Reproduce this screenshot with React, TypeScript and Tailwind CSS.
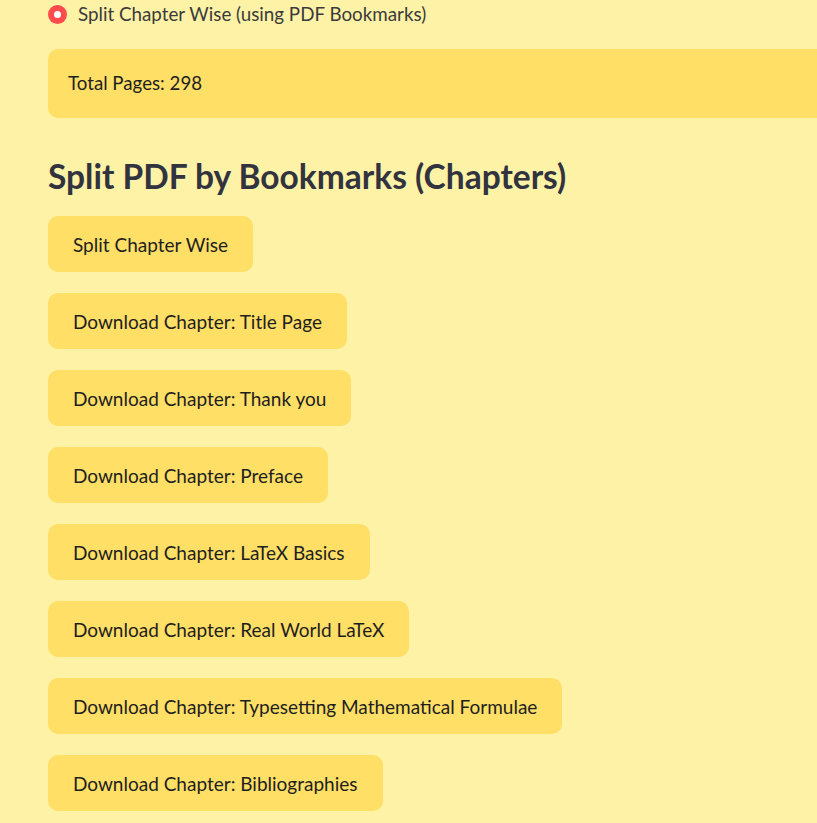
import React from "react";

const chapters = [
  "Title Page",
  "Thank you",
  "Preface",
  "LaTeX Basics",
  "Real World LaTeX",
  "Typesetting Mathematical Formulae",
  "Bibliographies",
];

function Btn({ children }: { children: React.ReactNode }) {
  return (
    <div className="flex">
      <button className="h-[56px] px-[25px] rounded-[10px] bg-[#ffdf66] text-[#1e1e1e] text-[19px] leading-none">
        {children}
      </button>
    </div>
  );
}

export default function App() {
  return (
    <div
      className="w-[817px] h-[823px] overflow-hidden bg-[#fef2a7]"
      style={{ fontFamily: "Lato, 'Noto Sans', sans-serif" }}
    >
      <div className="pl-[48px]">
        <div className="flex items-center h-[28px] mt-[0px] gap-[11px]">
          <div className="w-[19px] h-[19px] rounded-full bg-[#ff4b4b] flex items-center justify-center">
            <div className="w-[7px] h-[7px] rounded-full bg-white" />
          </div>
          <span className="text-[18.8px] text-[#3a3a3a]">
            Split Chapter Wise (using PDF Bookmarks)
          </span>
        </div>
        <div className="mt-[21px] h-[69px] w-[800px] rounded-l-[10px] bg-[#ffdf66] flex items-center pl-[20px] text-[18.7px] text-[#1e1e1e]">
          Total Pages: 298
        </div>
        <h2 className="mt-[36px] text-[33.5px] font-bold text-[#31333f] leading-[44px]">
          Split PDF by Bookmarks (Chapters)
        </h2>
        <div className="mt-[18px] flex flex-col gap-[21px]">
          <Btn>Split Chapter Wise</Btn>
          {chapters.map((c) => (
            <Btn key={c}>Download Chapter: {c}</Btn>
          ))}
        </div>
      </div>
    </div>
  );
}
